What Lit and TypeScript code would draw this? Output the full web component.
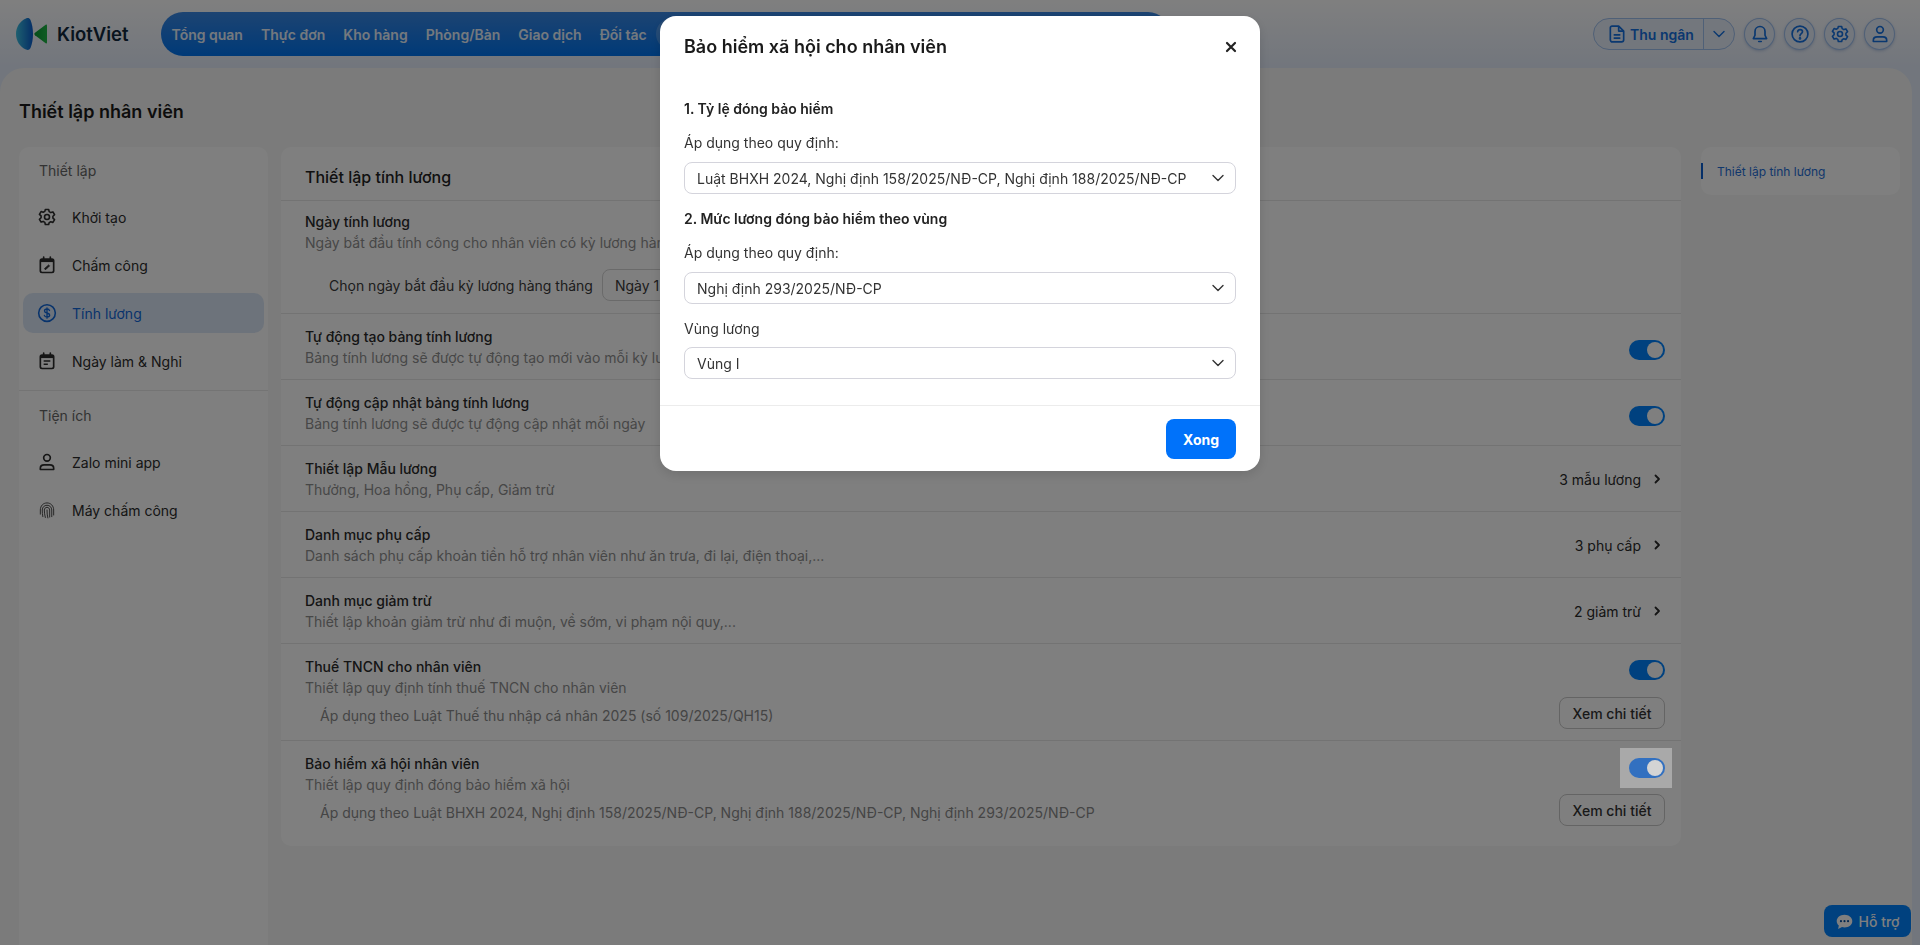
import { LitElement, css, html } from "lit";
import { customElement } from "lit/decorators.js";

const chevronRight = html`<svg class="chev" width="16" height="16" viewBox="0 0 16 16"><path d="M6.500 4.500 10 8l-3.500 3.500" fill="none" stroke="currentColor" stroke-width="1.800" stroke-linecap="round" stroke-linejoin="round"/></svg>`;
const chevronDown = html`<svg width="16" height="16" viewBox="0 0 16 16"><path d="M3 5.500 8 10.500l5-5" fill="none" stroke="currentColor" stroke-width="1.400" stroke-linecap="round" stroke-linejoin="round"/></svg>`;

const gear = html`<svg width="20" height="20" viewBox="0 0 24 24" fill="none" stroke="currentColor" stroke-width="1.900" stroke-linejoin="round"><path d="M10 3h4l.6 2.600 2 1.100 2.500-.8 2 3.400-2 1.800v2.200l2 1.800-2 3.400-2.500-.8-2 1.100L14 21h-4l-.6-2.600-2-1.100-2.500.8-2-3.400 2-1.800v-2.200l-2-1.800 2-3.400 2.500.8 2-1.100z"/><circle cx="12" cy="12" r="3"/></svg>`;
const calendarEdit = html`<svg width="20" height="20" viewBox="0 0 24 24" fill="none" stroke="currentColor" stroke-width="2"><rect x="4" y="5" width="16" height="16" rx="2"/><path d="M4 7h16" stroke-width="3"/><path d="M8 2.500V6M16 2.500V6" stroke-linecap="round"/><path d="M9 16.500 14 12l1 1-4.500 4.500z" fill="currentColor" stroke-width="1.200"/></svg>`;
const dollar = html`<svg width="20" height="20" viewBox="0 0 24 24" fill="none" stroke="currentColor" stroke-width="1.900" stroke-linecap="round"><circle cx="12" cy="12" r="10"/><path d="M15 9c-.4-1.200-1.500-1.800-3-1.800-1.700 0-3 .8-3 2.300 0 3.400 6.200 1.600 6.200 5 0 1.500-1.400 2.300-3.200 2.300-1.600 0-2.800-.7-3.200-2M12 5.800v12.400" stroke-width="1.600"/></svg>`;
const calendarNote = html`<svg width="20" height="20" viewBox="0 0 24 24" fill="none" stroke="currentColor" stroke-width="2"><rect x="4" y="5" width="16" height="16" rx="2"/><path d="M4 7h16" stroke-width="3"/><path d="M8 2.500V6M16 2.500V6" stroke-linecap="round"/><path d="M8 12h8M8 16h5" stroke-width="1.800"/></svg>`;
const user = html`<svg width="20" height="20" viewBox="0 0 24 24" fill="none" stroke="currentColor" stroke-width="2"><circle cx="12" cy="7" r="4"/><path d="M4 21v-1.500c0-2.500 2-4 4.500-4h7c2.500 0 4.500 1.500 4.500 4V21z" stroke-linejoin="round"/></svg>`;
const finger = html`<svg width="20" height="20" viewBox="0 0 24 24" fill="none" stroke="currentColor" stroke-width="1" stroke-linecap="round"><path d="M4 17V12c0-5 3.500-8.500 8-8.500s8 3.500 8 8.500v6"/><path d="M7 20c-.5-2.500-.7-5-.7-8 0-3.300 2.500-5.700 5.700-5.700s5.700 2.400 5.700 5.700v8"/><path d="M10 21c-.8-3-1.200-6-1.200-9 0-1.800 1.400-3.200 3.200-3.200s3.200 1.400 3.200 3.200v8.500"/><path d="M12 12c0 3.500.3 6.500 1 9.500"/></svg>`;

const bell = html`<svg width="20" height="20" viewBox="0 0 24 24" fill="none" stroke="currentColor" stroke-width="2" stroke-linejoin="round" stroke-linecap="round"><path d="M12 3c-3.500 0-6 2.700-6 6v4.500L4 17.500h16l-2-4V9c0-3.300-2.500-6-6-6z"/><path d="M10.500 21h3"/></svg>`;
const help = html`<svg width="20" height="20" viewBox="0 0 24 24" fill="none" stroke="currentColor" stroke-width="2" stroke-linecap="round"><circle cx="12" cy="12" r="9.500"/><path d="M9.200 9.300c.2-1.500 1.400-2.500 2.900-2.500 1.600 0 2.900 1.100 2.900 2.500 0 2.300-3 2.300-3 4.700"/><circle cx="12" cy="17.300" r=".6" fill="currentColor"/></svg>`;
const doc = html`<svg width="20" height="20" viewBox="0 0 24 24" fill="none" stroke="currentColor" stroke-width="2" stroke-linejoin="round"><path d="M6 2.500h8l6 6V19a2.500 2.500 0 0 1-2.500 2.500h-11A2.500 2.500 0 0 1 4 19V4.500a2 2 0 0 1 2-2z"/><path d="M14 2.500V8.500h6"/><path d="M8 13h8M8 17h8"/></svg>`;
const chat = html`<svg width="17" height="17" viewBox="0 0 24 24"><path d="M12 2.500C5.800 2.500 1 6.500 1 11.500c0 2.400 1.100 4.500 3 6.100L3 22.500l5.500-2.600c1.100.3 2.300.4 3.500.4 6.200 0 11-4 11-8.800S18.200 2.500 12 2.500z" fill="currentColor"/><g fill="#004a9c"><circle cx="7" cy="11.500" r="1.500"/><circle cx="12" cy="11.500" r="1.500"/><circle cx="17" cy="11.500" r="1.500"/></g></svg>`;

const navItems = ["Tổng quan", "Thực đơn", "Kho hàng", "Phòng/Bàn", "Giao dịch", "Đối tác"];
const simpleRows = [
  { title: "Thiết lập Mẫu lương", desc: "Thưởng, Hoa hồng, Phụ cấp, Giảm trừ", meta: "3 mẫu lương" },
  { title: "Danh mục phụ cấp", desc: "Danh sách phụ cấp khoản tiền hỗ trợ nhân viên như ăn trưa, đi lại, điện thoại,...", meta: "3 phụ cấp" },
  { title: "Danh mục giảm trừ", desc: "Thiết lập khoản giảm trừ như đi muộn, về sớm, vi phạm nội quy,...", meta: "2 giảm trừ" },
];

@customElement("app-root")
export class AppRoot extends LitElement {
  private side(icon: unknown, label: string, active = false) {
    return html`<div class="side-item ${active ? "active" : ""}">${icon}<span>${label}</span></div>`;
  }

  private select(value: string) {
    return html`<div class="select"><span>${value}</span>${chevronDown}</div>`;
  }

  render() {
    return html`
      <div class="page">
        <header class="top">
          <div class="logo">
            <svg width="32" height="32" viewBox="0 0 32 32">
              <defs>
                <linearGradient id="lg" x1="0" x2="1" y1="0" y2="0">
                  <stop offset="0" stop-color="#3cc0e0" />
                  <stop offset="1" stop-color="#0a5ccc" />
                </linearGradient>
                <linearGradient id="lg2" x1="0" x2="1" y1="0" y2="0">
                  <stop offset="0" stop-color="#0a9a32" />
                  <stop offset="1" stop-color="#20b848" />
                </linearGradient>
              </defs>
              <path d="M10 .5C4 3 0 9 0 16s4 13 10 15.500c2 .9 3.500 .3 4.500-1.500C16 26.500 17 21.500 17 16S16 5.500 14.500 2C13.500 .2 12 -.4 10 .5z" fill="url(#lg)" />
              <path d="M31 7.500V24.500c0 .8-.6 1.100-1.300 .7L19 17.200c-.9-.7-.9-1.700 0-2.400L29.700 6.800c.7-.4 1.300-.1 1.300 .7z" fill="url(#lg2)" />
            </svg>
            <span>KiotViet</span>
          </div>
          <nav class="nav">
            ${navItems.map((n) => html`<span>${n}</span>`)}
            <i class="nav-active"></i>
          </nav>
          <div class="tools">
            <div class="role">
              <div class="role-main">${doc}<span>Thu ngân</span></div>
              <div class="role-more">${chevronDown}</div>
            </div>
            <div class="round">${bell}</div>
            <div class="round">${help}</div>
            <div class="round">${gear}</div>
            <div class="round">${user}</div>
          </div>
        </header>

        <main class="panel">
          <h1>Thiết lập nhân viên</h1>
          <div class="cols">
            <aside class="sidebar">
              <div class="side-label">Thiết lập</div>
              ${this.side(gear, "Khởi tạo")}
              ${this.side(calendarEdit, "Chấm công")}
              ${this.side(dollar, "Tính lương", true)}
              ${this.side(calendarNote, "Ngày làm & Nghỉ")}
              <div class="side-line"></div>
              <div class="side-label">Tiện ích</div>
              ${this.side(user, "Zalo mini app")}
              ${this.side(finger, "Máy chấm công")}
            </aside>

            <section class="card">
              <h2>Thiết lập tính lương</h2>

              <div class="row first">
                <div class="title">Ngày tính lương</div>
                <div class="desc">Ngày bắt đầu tính công cho nhân viên có kỳ lương hàng tháng</div>
                <div class="pick">
                  <span>Chọn ngày bắt đầu kỳ lương hàng tháng</span>
                  <div class="day">Ngày 1</div>
                </div>
              </div>

              <div class="row split">
                <div>
                  <div class="title">Tự động tạo bảng tính lương</div>
                  <div class="desc">Bảng tính lương sẽ được tự động tạo mới vào mỗi kỳ lương</div>
                </div>
                <div class="toggle mid"><i></i></div>
              </div>

              <div class="row split">
                <div>
                  <div class="title">Tự động cập nhật bảng tính lương</div>
                  <div class="desc">Bảng tính lương sẽ được tự động cập nhật mỗi ngày</div>
                </div>
                <div class="toggle mid"><i></i></div>
              </div>

              ${simpleRows.map(
                (r) => html`
                  <div class="row split">
                    <div>
                      <div class="title">${r.title}</div>
                      <div class="desc">${r.desc}</div>
                    </div>
                    <div class="meta"><span>${r.meta}</span>${chevronRight}</div>
                  </div>
                `,
              )}

              <div class="row">
                <div class="split">
                  <div>
                    <div class="title">Thuế TNCN cho nhân viên</div>
                    <div class="desc">Thiết lập quy định tính thuế TNCN cho nhân viên</div>
                  </div>
                  <div class="toggle high"><i></i></div>
                </div>
                <div class="applied">
                  <span>Áp dụng theo Luật Thuế thu nhập cá nhân 2025 (số 109/2025/QH15)</span>
                  <div class="btn">Xem chi tiết</div>
                </div>
              </div>

              <div class="row last">
                <div class="split">
                  <div>
                    <div class="title">Bảo hiểm xã hội nhân viên</div>
                    <div class="desc">Thiết lập quy định đóng bảo hiểm xã hội</div>
                  </div>
                  <div class="toggle high"><i></i></div>
                </div>
                <div class="applied">
                  <span>Áp dụng theo Luật BHXH 2024, Nghị định 158/2025/NĐ-CP, Nghị định 188/2025/NĐ-CP, Nghị định 293/2025/NĐ-CP</span>
                  <div class="btn">Xem chi tiết</div>
                </div>
              </div>
            </section>

            <aside class="anchor"><span>Thiết lập tính lương</span></aside>
          </div>
        </main>

        <div class="support">${chat}<span>Hỗ trợ</span></div>
      </div>

      <div class="overlay"></div>
      <div class="spot"><div class="toggle lit"><i></i></div></div>

      <div class="modal">
        <div class="m-head">
          <span>Bảo hiểm xã hội cho nhân viên</span>
          <svg width="16" height="16" viewBox="0 0 16 16"><path d="M4 4l8 8M12 4l-8 8" stroke="#222" stroke-width="2.200" stroke-linecap="round"/></svg>
        </div>
        <div class="m-body">
          <div class="m-section">1. Tỷ lệ đóng bảo hiểm</div>
          <div class="m-label">Áp dụng theo quy định:</div>
          ${this.select("Luật BHXH 2024, Nghị định 158/2025/NĐ-CP, Nghị định 188/2025/NĐ-CP")}
          <div class="m-section second">2. Mức lương đóng bảo hiểm theo vùng</div>
          <div class="m-label">Áp dụng theo quy định:</div>
          ${this.select("Nghị định 293/2025/NĐ-CP")}
          <div class="m-label third">Vùng lương</div>
          ${this.select("Vùng I")}
        </div>
        <div class="m-foot"><div class="done">Xong</div></div>
      </div>
    `;
  }

  static styles = css`
    :host {
      display: block;
      height: 945px;
      overflow: hidden;
      font-family: Inter, "Noto Sans", sans-serif;
      font-size: 14px;
      line-height: 21px;
      color: #222;
    }

    * {
      box-sizing: border-box;
    }

    svg {
      flex: none;
      display: block;
    }

    .page {
      position: relative;
      height: 945px;
      display: flex;
      flex-direction: column;
      background: linear-gradient(180deg, #fff 0, #e4ecfa 68px);
    }

    .top {
      height: 68px;
      flex: none;
      display: flex;
      align-items: flex-start;
    }

    .logo {
      width: 161px;
      padding: 18px 0 0 16px;
      display: flex;
      align-items: center;
      gap: 9px;
      font-size: 18.500px;
      font-weight: 600;
      color: #10283c;
      line-height: 32px;
    }

    .nav {
      margin-top: 12px;
      width: 1009px;
      height: 44px;
      border-radius: 22px;
      padding-left: 10.500px;
      background: linear-gradient(180deg, #3a88e4, #0074f0);
      display: flex;
      align-items: center;
      gap: 18px;
      color: #fff;
      font-weight: 600;
      white-space: nowrap;
    }

    .nav span {
      opacity: 0.9;
    }

    .nav .nav-active {
      width: 73px;
      height: 32px;
      margin-left: -9px;
      border-radius: 16px;
      background: rgba(255, 255, 255, 0.2);
    }

    .tools {
      margin-left: auto;
      margin-right: 25px;
      margin-top: 18px;
      display: flex;
      gap: 9px;
      color: #1470e0;
    }

    .role {
      width: 142px;
      height: 32px;
      display: flex;
      border: 1px solid #9fc0ee;
      border-radius: 16px;
      background: #e6eefa;
      font-weight: 600;
    }

    .role-main {
      width: 110px;
      padding-left: 13px;
      display: flex;
      align-items: center;
      gap: 3px;
      border-right: 1px solid #9fc0ee;
    }

    .role-more {
      flex: 1;
      display: flex;
      align-items: center;
      justify-content: center;
    }

    .round {
      width: 31px;
      height: 32px;
      border: 1px solid #9fc0ee;
      border-radius: 50%;
      background: #e6eefa;
      display: flex;
      align-items: center;
      justify-content: center;
      box-shadow: 0 1px 3px rgba(30, 80, 160, 0.25);
    }

    .panel {
      flex: 1;
      margin-right: 8px;
      padding: 0 12px 0 19px;
      background: #f6f7f6;
      border-radius: 24px 24px 0 0;
      display: flex;
      flex-direction: column;
      min-height: 0;
    }

    h1 {
      margin: 32px 0 23px 0;
      font-size: 18px;
      line-height: 24px;
      font-weight: 600;
      color: #1a1a1a;
    }

    .cols {
      flex: 1;
      display: flex;
      align-items: flex-start;
    }

    .sidebar {
      width: 249px;
      height: 798px;
      flex: none;
      padding: 0 4px;
      background: #fefefe;
      border-radius: 10px 10px 0 0;
    }

    .side-label {
      height: 48px;
      padding: 0 0 1px 16px;
      display: flex;
      align-items: center;
      color: #666;
      margin-bottom: 2px;
    }

    .side-item {
      height: 40px;
      margin-bottom: 8px;
      padding-left: 14px;
      display: flex;
      align-items: center;
      gap: 15px;
      border-radius: 10px;
      color: #2c2c2c;
    }

    .side-item.active {
      background: #dbe7f7;
      color: #1167d8;
    }

    .side-line {
      margin: 9px -4px 1px;
      height: 1px;
      background: #e9e9e9;
    }

    .card {
      width: 1400px;
      margin-left: 13px;
      flex: none;
      background: #fff;
      border-radius: 10px;
    }

    h2 {
      margin: 0;
      height: 53px;
      padding: 8px 0 0 24px;
      display: flex;
      align-items: center;
      font-size: 16px;
      font-weight: 500;
      color: #222;
    }

    .row {
      padding: 12px 16px 11px 24px;
      border-top: 1px solid #e6e6e6;
    }

    .row.first {
      padding-top: 10px;
      padding-bottom: 12px;
    }

    .row.last {
      padding-bottom: 20px;
    }

    .split {
      display: flex;
      justify-content: space-between;
      align-items: center;
    }

    .title {
      color: #2a2a2a;
      font-weight: 500;
    }

    .desc {
      color: #8e8e8e;
    }

    .pick {
      margin: 16px 0 0 24px;
      height: 32px;
      display: flex;
      align-items: center;
      gap: 9px;
      color: #3a3a3a;
    }

    .day {
      width: 120px;
      height: 32px;
      padding-left: 12px;
      display: flex;
      align-items: center;
      border: 1px solid #d4d4d4;
      border-radius: 8px;
    }

    .toggle {
      width: 36px;
      height: 20px;
      flex: none;
      padding: 2px;
      border-radius: 10px;
      background: #0083ff;
      display: flex;
      justify-content: flex-end;
    }

    .toggle i {
      width: 16px;
      height: 16px;
      border-radius: 50%;
      background: #fff;
    }

    .toggle.mid {
      margin-top: 6px;
    }

    .toggle.high {
      align-self: flex-start;
      margin-top: 4px;
    }

    .meta {
      display: flex;
      align-items: center;
      gap: 8px;
      color: #2a2a2a;
    }

    .applied {
      margin-top: -1px;
      padding-left: 15px;
      display: flex;
      justify-content: space-between;
      color: #8a8a8a;
    }

    .applied span {
      padding-top: 8px;
    }

    .btn {
      width: 106px;
      height: 32px;
      flex: none;
      display: flex;
      align-items: center;
      justify-content: center;
      border: 1px solid #c8c8c8;
      border-radius: 8px;
      color: #333;
      font-weight: 500;
    }

    .anchor {
      width: 199px;
      height: 48px;
      margin-left: 20px;
      flex: none;
      display: flex;
      align-items: center;
      background: #fefefe;
      border-radius: 10px;
      font-size: 12px;
      color: #1f6fd8;
    }

    .anchor span {
      height: 16px;
      padding-left: 14px;
      display: flex;
      align-items: center;
      border-left: 2px solid #0a5fd0;
    }

    .support {
      position: absolute;
      left: 1824px;
      top: 905px;
      width: 87px;
      height: 32px;
      display: flex;
      align-items: center;
      justify-content: center;
      gap: 6px;
      background: #0083ff;
      border-radius: 8px;
      color: #fff;
      font-weight: 500;
    }

    .overlay {
      position: fixed;
      inset: 0;
      background: rgba(0, 0, 0, 0.5);
    }

    .spot {
      position: fixed;
      left: 1620px;
      top: 748px;
      width: 52px;
      height: 40px;
      padding: 10px 7px 10px 9px;
      background: #a9a9a9;
    }

    .toggle.lit {
      background: #3270c0;
    }

    .toggle.lit i {
      background: #d4d4d4;
    }

    .modal {
      position: fixed;
      left: 660px;
      top: 16px;
      width: 600px;
      height: 455px;
      background: #fff;
      border-radius: 16px;
      display: flex;
      flex-direction: column;
      box-shadow: 0 4px 12px rgba(0, 0, 0, 0.12);
    }

    .m-head {
      height: 61px;
      flex: none;
      padding: 0 21px 0 24px;
      display: flex;
      align-items: center;
      justify-content: space-between;
      font-size: 18px;
      font-weight: 600;
      color: #1a1a1a;
    }

    .m-body {
      flex: 1;
      padding: 21px 24px 0;
      border-bottom: 1px solid #ececec;
    }

    .m-section {
      height: 21px;
      font-weight: 600;
      color: #222;
    }

    .m-section.second {
      margin-top: 14px;
    }

    .m-label {
      margin-top: 13px;
      margin-bottom: 9px;
      color: #333;
    }

    .m-label.third {
      margin-top: 14px;
      margin-bottom: 8px;
    }

    .select {
      height: 32px;
      padding: 0 9px 0 12px;
      display: flex;
      align-items: center;
      justify-content: space-between;
      border: 1px solid #d4d4dc;
      border-radius: 8px;
      color: #333;
    }

    .m-foot {
      height: 65px;
      flex: none;
      padding: 13px 24px 0;
      display: flex;
      justify-content: flex-end;
    }

    .done {
      width: 70px;
      height: 40px;
      display: flex;
      align-items: center;
      justify-content: center;
      background: #0072fa;
      border-radius: 8px;
      color: #fff;
      font-weight: 700;
    }
  `;
}
